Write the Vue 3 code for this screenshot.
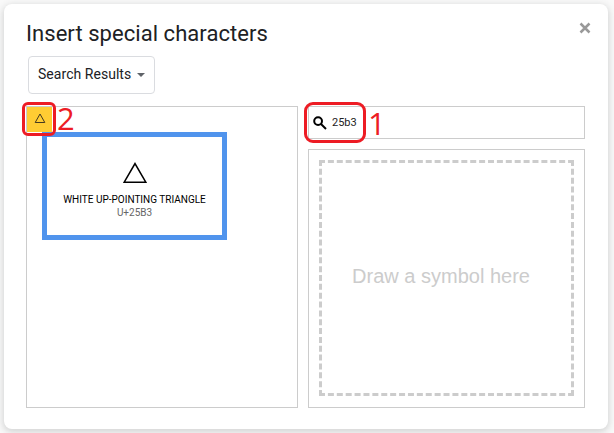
<script setup>
import { ref } from 'vue'

const query = ref('25b3')
const result = { glyph: '△', name: 'WHITE UP-POINTING TRIANGLE', code: 'U+25B3' }
</script>

<template>
  <main class="dialog">
    <header class="head">
      <h1 class="title">Insert special characters</h1>
      <svg class="close" viewBox="0 0 12 12" aria-label="Close">
        <path d="M1.5 1.5 10.5 10.5M10.5 1.5 1.5 10.5" />
      </svg>
    </header>

    <button class="picker">
      <span class="picker-label">Search Results</span>
      <span class="caret"></span>
    </button>

    <div class="columns">
      <section class="results">
        <div class="cell" :aria-label="result.glyph">
          <svg class="cell-glyph" viewBox="0 0 12 11"><path d="M6 1 10.8 9.5H1.2Z" /></svg>
        </div>
        <div class="tip">
          <svg class="tip-glyph" viewBox="0 0 24 22"><path d="M12 1.6 22.8 20.2H1.2Z" /></svg>
          <span class="tip-name">{{ result.name }}</span>
          <span class="tip-code">{{ result.code }}</span>
        </div>
        <div class="mark mark-two"></div>
        <span class="num num-two">2</span>
      </section>

      <div class="side">
        <div class="search">
          <svg class="lens" viewBox="0 0 14 14">
            <circle cx="5.1" cy="5.1" r="3.9" />
            <path d="M8 8 13 13" />
          </svg>
          <span class="query">{{ query }}</span>
          <div class="mark mark-one"></div>
          <span class="num num-one">1</span>
        </div>
        <div class="draw">
          <svg class="dashes" viewBox="0 0 255 236">
            <path class="h" d="M0 1.5H255" />
            <path class="h" d="M0 234.5H255" />
            <path class="v" d="M1.5 0V236" />
            <path class="v" d="M253.5 0V236" />
          </svg>
          <span class="hint">Draw a symbol here</span>
        </div>
      </div>
    </div>
  </main>
</template>

<style>
body {
  background: #f9f9f9;
  overflow: hidden;
}
</style>

<style scoped>
* {
  box-sizing: border-box;
}
.dialog {
  width: 604px;
  height: 425px;
  margin: 4px;
  padding: 0 23px 21px 22px;
  display: flex;
  flex-direction: column;
  background: #fff;
  border-radius: 8px;
  box-shadow: 0 2px 7px 1px rgba(60, 64, 67, 0.2);
  font-family: Roboto, "Liberation Sans", sans-serif;
}
.head {
  height: 52px;
  display: flex;
  justify-content: space-between;
}
.title {
  margin: 16px 0 0 0;
  font: 400 22px/28px Roboto, sans-serif;
  letter-spacing: 0.05px;
  color: #202124;
  white-space: nowrap;
}
.close {
  width: 12px;
  height: 12px;
  margin: 18px -6px 0 0;
}
.close path {
  stroke: #999;
  stroke-width: 2.5;
}
.picker {
  width: 127px;
  height: 38px;
  margin: 0 0 12px 2px;
  padding: 0 9px 2px;
  display: flex;
  align-items: center;
  gap: 6px;
  background: #fff;
  border: 1px solid #dadce0;
  border-radius: 4px;
  font: 14px/20px Roboto, sans-serif;
  color: #202124;
}
.picker-label {
  white-space: nowrap;
  letter-spacing: 0.04px;
}
.caret {
  margin-top: 2px;
  border: 4px solid transparent;
  border-top-color: #5f6368;
  border-bottom: 0;
}
.columns {
  flex: 1;
  display: grid;
  grid-template-columns: 272px 277px;
  gap: 10px;
}
.results {
  position: relative;
  border: 1px solid #ccc;
}
.cell {
  width: 25px;
  height: 25px;
  padding: 0 0 2px 0;
  display: flex;
  align-items: center;
  justify-content: center;
  background: #fc3;
}
.cell-glyph {
  width: 12px;
  height: 11px;
}
.cell-glyph path {
  fill: none;
  stroke: #443a20;
  stroke-width: 1;
}
.tip {
  position: absolute;
  left: 15px;
  top: 25px;
  width: 185px;
  height: 108px;
  padding-top: 25px;
  display: flex;
  flex-direction: column;
  align-items: center;
  background: #fff;
  border: 5px solid #5094ed;
}
.tip-glyph {
  width: 24px;
  height: 22px;
  margin-bottom: 9px;
}
.tip-glyph path {
  fill: none;
  stroke: #000;
  stroke-width: 1.6;
}
.tip-name,
.tip-code {
  font-size: 10px;
  line-height: 13px;
  white-space: nowrap;
}
.tip-name {
  color: #000;
}
.tip-code {
  color: #666;
}
.mark {
  position: absolute;
  border: 3px solid #ed1c24;
}
.mark-two {
  left: -5px;
  top: -5px;
  width: 34px;
  height: 34px;
  border-radius: 6px;
}
.num {
  position: absolute;
  font: 31px/32px "Open Sans", sans-serif;
  color: #ed1c24;
}
.num-two {
  left: 30px;
  top: -5px;
}
.side {
  display: flex;
  flex-direction: column;
  gap: 10px;
}
.search {
  position: relative;
  height: 33px;
  padding-left: 4px;
  display: flex;
  align-items: center;
  gap: 5px;
  border: 1px solid #ccc;
}
.lens {
  width: 14px;
  height: 14px;
}
.lens circle,
.lens path {
  fill: none;
  stroke: #000;
  stroke-width: 2;
}
.query {
  font-size: 11px;
  line-height: 14px;
  color: #222;
}
.mark-one {
  left: -5px;
  top: -5px;
  width: 62px;
  height: 41px;
  border-radius: 9px;
}
.num-one {
  left: 59px;
  top: 0;
}
.draw {
  flex: 1;
  display: grid;
  place-items: center;
  padding-bottom: 1px;
  border: 1px solid #ccc;
}
.dashes,
.hint {
  grid-area: 1 / 1;
}
.dashes {
  width: 255px;
  height: 236px;
}
.dashes path {
  stroke: #ccc;
  stroke-width: 3;
}
.dashes .h {
  stroke-dasharray: 6 2.895;
}
.dashes .v {
  stroke-dasharray: 6 2.846;
}
.hint {
  margin: 0 11px 5px 0;
  font: 20px/24px "Liberation Sans", sans-serif;
  color: #ccc;
  white-space: nowrap;
}
</style>
